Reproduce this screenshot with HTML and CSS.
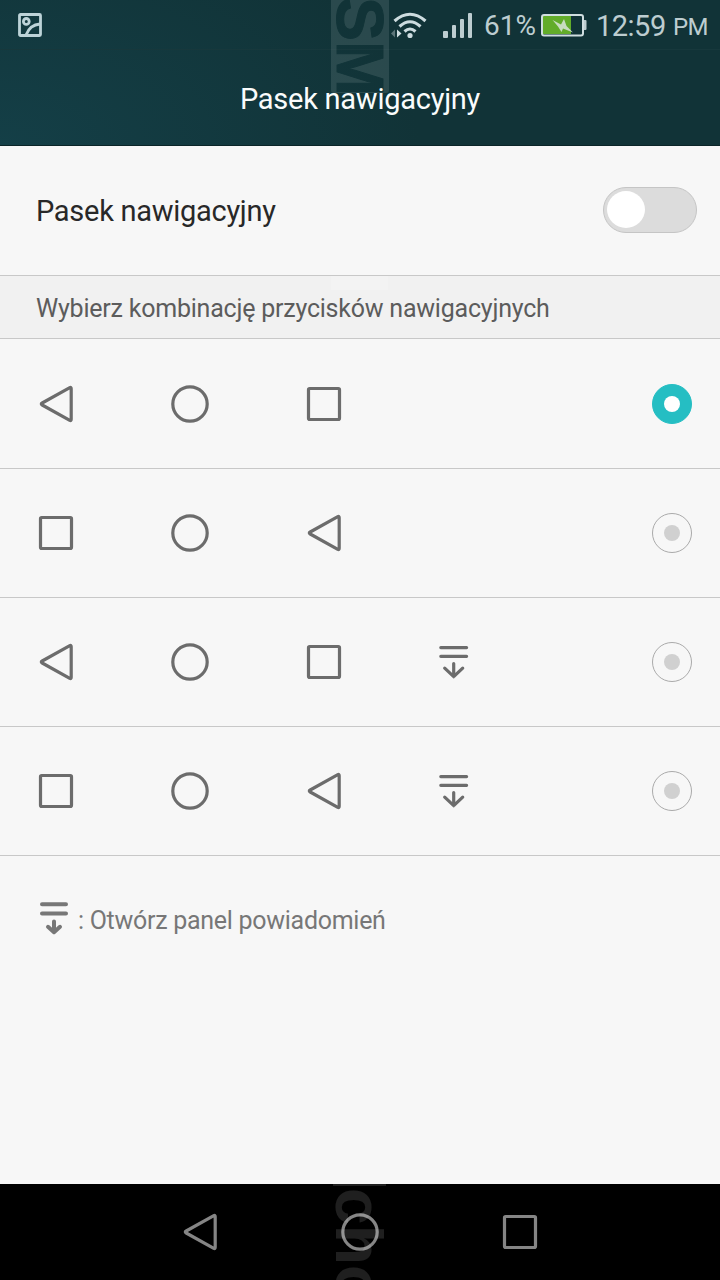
FILE: index.html
```html
<!DOCTYPE html>
<html lang="pl">
<head>
<meta charset="utf-8">
<title>Pasek nawigacyjny</title>
<link rel="stylesheet" href="styles.css">
</head>
<body>
<svg class="defs" width="0" height="0" aria-hidden="true">
  <defs>
    <symbol id="back" viewBox="0 0 40 40"><path d="M33.8 3.7Q35.2 2.9 35.2 4.7V35.3Q35.2 37.1 33.8 36.3L6.2 21Q4.4 20 6.2 19Z"/></symbol>
    <symbol id="home" viewBox="0 0 40 40"><circle cx="20" cy="20" r="17.2"/></symbol>
    <symbol id="recent" viewBox="0 0 40 40"><rect x="4.5" y="4.5" width="31" height="31" rx="1.2"/></symbol>
    <symbol id="panel" viewBox="0 0 40 40"><path d="M6.8 5.6H32.6M6.8 14.3H32.6M19.7 21.5V34.5M10.7 26.2L19.7 34.7L28.7 26.2"/></symbol>
    <symbol id="panel-bold" viewBox="0 0 40 40"><path d="M8 4.2H32M8 13.4H32M20 21.5V31.5M14 26.8L20 32.2L26 26.8"/></symbol>
  </defs>
</svg>
<div class="screen">
  <header class="header">
    <div class="status">
      <svg class="picture" width="26" height="26" viewBox="0 0 26 26"><rect x="2.5" y="1.5" width="21" height="21" rx="1"/><circle cx="9.3" cy="8.4" r="2.9"/><path d="M9 22C11.5 15.5 16 11.5 23 11"/></svg>
      <svg class="wifi" width="38" height="28" viewBox="0 0 38 28">
        <path d="M4.5 9Q20 -4.5 35.5 9M9.5 14.5Q20 5 30.5 14.5M14.5 19.5Q20 14.5 25.5 19.5"/>
        <circle cx="20" cy="23.5" r="2.6"/><path class="up" d="M7 17.5L11.5 21.5L7 25.5Z"/><path class="down" d="M5 17.5V25.5L1 21.5Z"/>
      </svg>
      <svg class="signal" width="30" height="26" viewBox="0 0 30 26"><rect x="0" y="18" width="5" height="7" rx="1"/><rect x="9" y="12" width="4" height="13" rx="1"/><rect x="17" y="6" width="4" height="19" rx="1"/><rect x="25" y="0" width="4" height="25" rx="1"/></svg>
      <span class="percent">61%</span>
      <svg class="battery" width="46" height="24" viewBox="0 0 46 24"><rect class="charge" x="2" y="2" width="28" height="18"/><rect class="case" x="1" y="1" width="41" height="20.5" rx="2"/><path class="tip" d="M43 6h1.5q1 0 1 1v8q0 1-1 1H43Z"/><path class="bolt" d="M11.5 6L20 10.5L23 5L25.5 12L32 18.5L22 14.5L20.5 18L17 12.5Z"/></svg>
      <span class="time">12:59</span><span class="pm">PM</span>
    </div>
    <h1 class="title">Pasek nawigacyjny</h1>
  </header>
  <main class="content">
    <div class="row switch-row"><span class="label">Pasek nawigacyjny</span><span class="switch"><span class="knob"></span></span></div>
    <h2 class="section">Wybierz kombinację przycisków nawigacyjnych</h2>
    <div class="row option"><svg class="icon"><use href="#back"/></svg><svg class="icon"><use href="#home"/></svg><svg class="icon"><use href="#recent"/></svg><span class="radio selected"></span></div>
    <div class="row option"><svg class="icon"><use href="#recent"/></svg><svg class="icon"><use href="#home"/></svg><svg class="icon"><use href="#back"/></svg><span class="radio"></span></div>
    <div class="row option"><svg class="icon"><use href="#back"/></svg><svg class="icon"><use href="#home"/></svg><svg class="icon"><use href="#recent"/></svg><svg class="icon panel"><use href="#panel"/></svg><span class="radio"></span></div>
    <div class="row option"><svg class="icon"><use href="#recent"/></svg><svg class="icon"><use href="#home"/></svg><svg class="icon"><use href="#back"/></svg><svg class="icon panel"><use href="#panel"/></svg><span class="radio"></span></div>
    <div class="hint"><svg class="icon panel bold"><use href="#panel-bold"/></svg><span class="hint-text">: Otwórz panel powiadomień</span></div>
  </main>
  <nav class="navbar"><svg class="icon"><use href="#back"/></svg><svg class="icon"><use href="#home"/></svg><svg class="icon"><use href="#recent"/></svg></nav>
  <svg class="watermark" width="720" height="1280" viewBox="0 0 720 1280" aria-hidden="true">
    <defs><mask id="cut"><rect width="720" height="1280" fill="#fff"/><text class="cutout" transform="translate(337 -3) rotate(90)">SM</text></mask></defs>
    <rect class="badge" x="331" y="-20" width="58" height="113" rx="3" mask="url(#cut)"/>
    <rect class="ghost" x="331" y="276" width="57" height="14"/>
    <rect class="trace" x="333" y="1184" width="53" height="2"/>
    <text class="trace" transform="translate(336 1188) rotate(90)">cho</text>
  </svg>
</div>
</body>
</html>
```

FILE: styles.css
```css
* { box-sizing: border-box; }
body { margin: 0; font-family: Roboto, "Noto Sans", sans-serif; }
.defs { position: absolute; }
.screen { position: relative; display: flex; flex-direction: column; width: 720px; height: 1280px; overflow: hidden; background: #f7f7f7; }
.header { height: 146px; background: radial-gradient(ellipse 420px 240px at 0 100%, #143f47, #113337); border-bottom: 1px solid #0b2528; }
.status { display: flex; align-items: center; height: 50px; padding: 2px 12px 0 17px; color: #bdcdd0; border-bottom: 1px solid #17383c; }
.picture { fill: none; stroke: #bdd3d8; stroke-width: 2.8; margin-right: auto; }
.wifi { fill: none; stroke: #cddcdf; stroke-width: 3.1; margin-right: 15px; }
.wifi circle, .wifi .up { fill: #cddcdf; stroke: none; }
.wifi .down { fill: #5c7579; stroke: none; }
.signal { fill: #bdcdd0; margin-right: 11px; }
.percent { width: 57px; padding-top: 1px; font-size: 28px; line-height: 34px; white-space: nowrap; }
.battery { margin-right: 9px; }
.charge { fill: #62ac2a; }
.case { fill: none; stroke: #d0dee0; stroke-width: 2; }
.tip { fill: #bdcdd0; }
.bolt { fill: #c8dcc0; }
.time { width: 77px; padding-top: 1px; font-size: 29px; letter-spacing: -0.5px; line-height: 34px; white-space: nowrap; }
.pm { width: 35px; padding-top: 3px; font-size: 24px; letter-spacing: -0.6px; line-height: 34px; }
.title { margin: 0; height: 95px; color: #fafcfc; text-align: center; font-size: 29px; font-weight: 400; letter-spacing: -0.25px; line-height: 99px; }
.content { flex: 1; }
.row { display: flex; align-items: center; border-bottom: 1px solid #c8c8c8; }
.switch-row { height: 130px; padding: 0 23px 2px 36px; justify-content: space-between; }
.label { padding-top: 2px; color: #282828; font-size: 29px; letter-spacing: -0.28px; line-height: 34px; }
.switch { display: flex; align-items: center; width: 94px; height: 46px; padding-left: 3px; border: 1px solid #c5c5c5; border-radius: 23px; background: #dcdcdc; }
.knob { width: 38px; height: 37px; border-radius: 50%; background: #fff; }
.section { height: 63px; margin: 0; padding-left: 36px; background: #f1f1f1; border-bottom: 1px solid #c8c8c8; color: #5c5c5c; font-size: 25px; font-weight: 400; letter-spacing: -0.22px; line-height: 66px; }
.option { height: 129px; padding: 0 28px 0 36px; gap: 94px; }
.section + .option { height: 130px; padding-top: 1px; }
.icon { flex: none; width: 40px; height: 40px; fill: none; stroke: #6c6c6c; stroke-width: 3.2; stroke-linejoin: round; stroke-linecap: round; }
.option .panel { margin-left: -4px; }
.radio { display: grid; place-items: center; width: 40px; height: 40px; margin-left: auto; border: 1px solid #aaa; border-radius: 50%; }
.radio::after { content: ""; width: 16px; height: 16px; border-radius: 50%; background: #d0d0d0; }
.selected { border-color: #25bec3; background: #25bec3; }
.selected::after { background: #fff; }
.hint { display: flex; align-items: center; height: 128px; padding-left: 34px; color: #777; font-size: 25px; letter-spacing: -0.28px; }
.hint-text { margin-left: 4px; }
.bold { stroke: #777; stroke-width: 4; }
.navbar { display: flex; align-items: center; justify-content: center; gap: 120px; height: 96px; background: #000; }
.navbar .icon { stroke: #858585; }
.watermark { position: absolute; inset: 0; pointer-events: none; font-family: "Liberation Sans", sans-serif; font-size: 66px; font-weight: 700; }
.cutout { fill: #000; stroke: #000; stroke-width: 1; }
.badge { fill: rgba(160, 175, 180, .18); }
.ghost { fill: rgba(255, 255, 255, .2); }
.trace { fill: rgba(255, 255, 255, .12); }
```
